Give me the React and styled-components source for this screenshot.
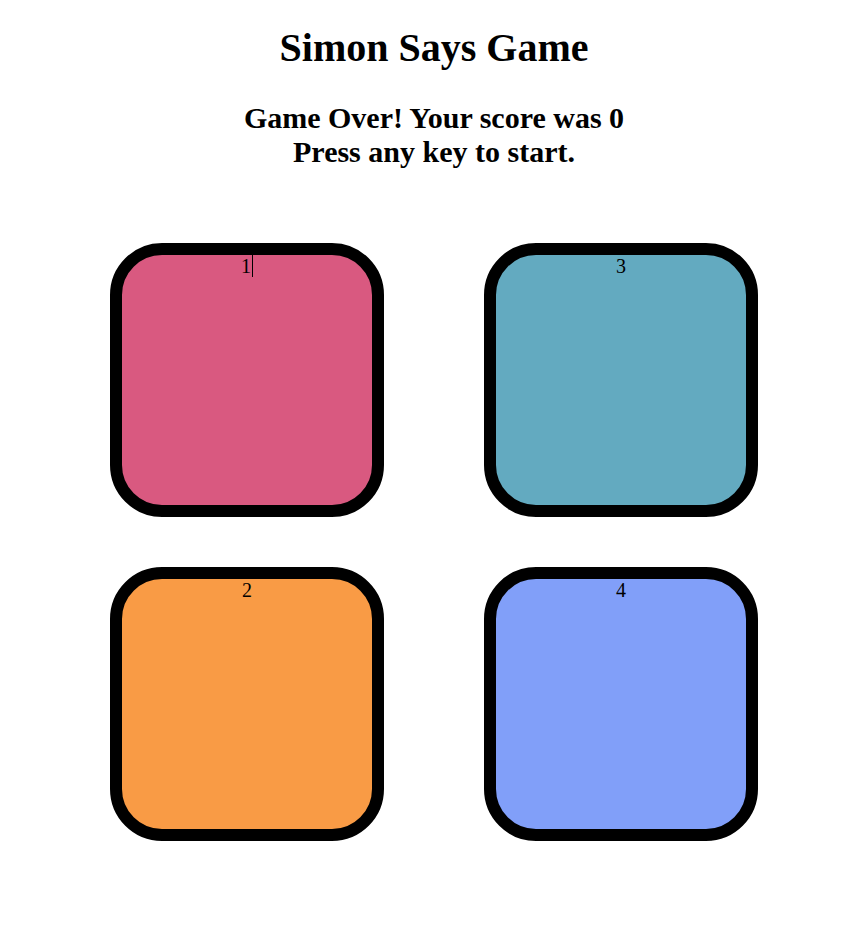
import React from "react";
import styled, { createGlobalStyle } from "styled-components";

const GlobalStyle = createGlobalStyle`
  body {
    margin: 8px;
    font-family: "Liberation Serif", "Times New Roman", serif;
    background: #ffffff;
    color: #000000;
  }
`;

const Page = styled.div`
  display: flex;
  flex-direction: column;
  align-items: center;
  text-align: center;
`;

const Title = styled.h1`
  font-size: 40px;
  font-weight: bold;
  margin: 16px 0 0;
`;

const Status = styled.h2`
  font-size: 30px;
  font-weight: bold;
  margin: 30px 0 0;
`;

const Board = styled.div`
  display: grid;
  grid-template-columns: repeat(2, 274px);
  column-gap: 100px;
  row-gap: 50px;
  margin-top: 74px;
`;

const Pad = styled.div`
  box-sizing: border-box;
  width: 274px;
  height: 274px;
  border: 12px solid #000;
  border-radius: 52px;
  background: ${(p) => p.$color};
  font-size: 20px;
  line-height: 23px;
  text-align: center;
`;

const Caret = styled.span`
  display: inline-block;
  width: 1px;
  height: 22px;
  background: #000;
  vertical-align: top;
  margin-left: 1px;
`;

const pads = [
  { id: "1", color: "#d95980", caret: true },
  { id: "3", color: "#63aac0" },
  { id: "2", color: "#f99b45" },
  { id: "4", color: "#819ff9" },
];

export default function App() {
  return (
    <>
      <GlobalStyle />
      <Page>
        <Title>Simon Says Game</Title>
        <Status>
          Game Over! Your score was 0
          <br />
          Press any key to start.
        </Status>
        <Board>
          {pads.map((p) => (
            <Pad key={p.id} $color={p.color}>
              {p.id}
              {p.caret && <Caret />}
            </Pad>
          ))}
        </Board>
      </Page>
    </>
  );
}
